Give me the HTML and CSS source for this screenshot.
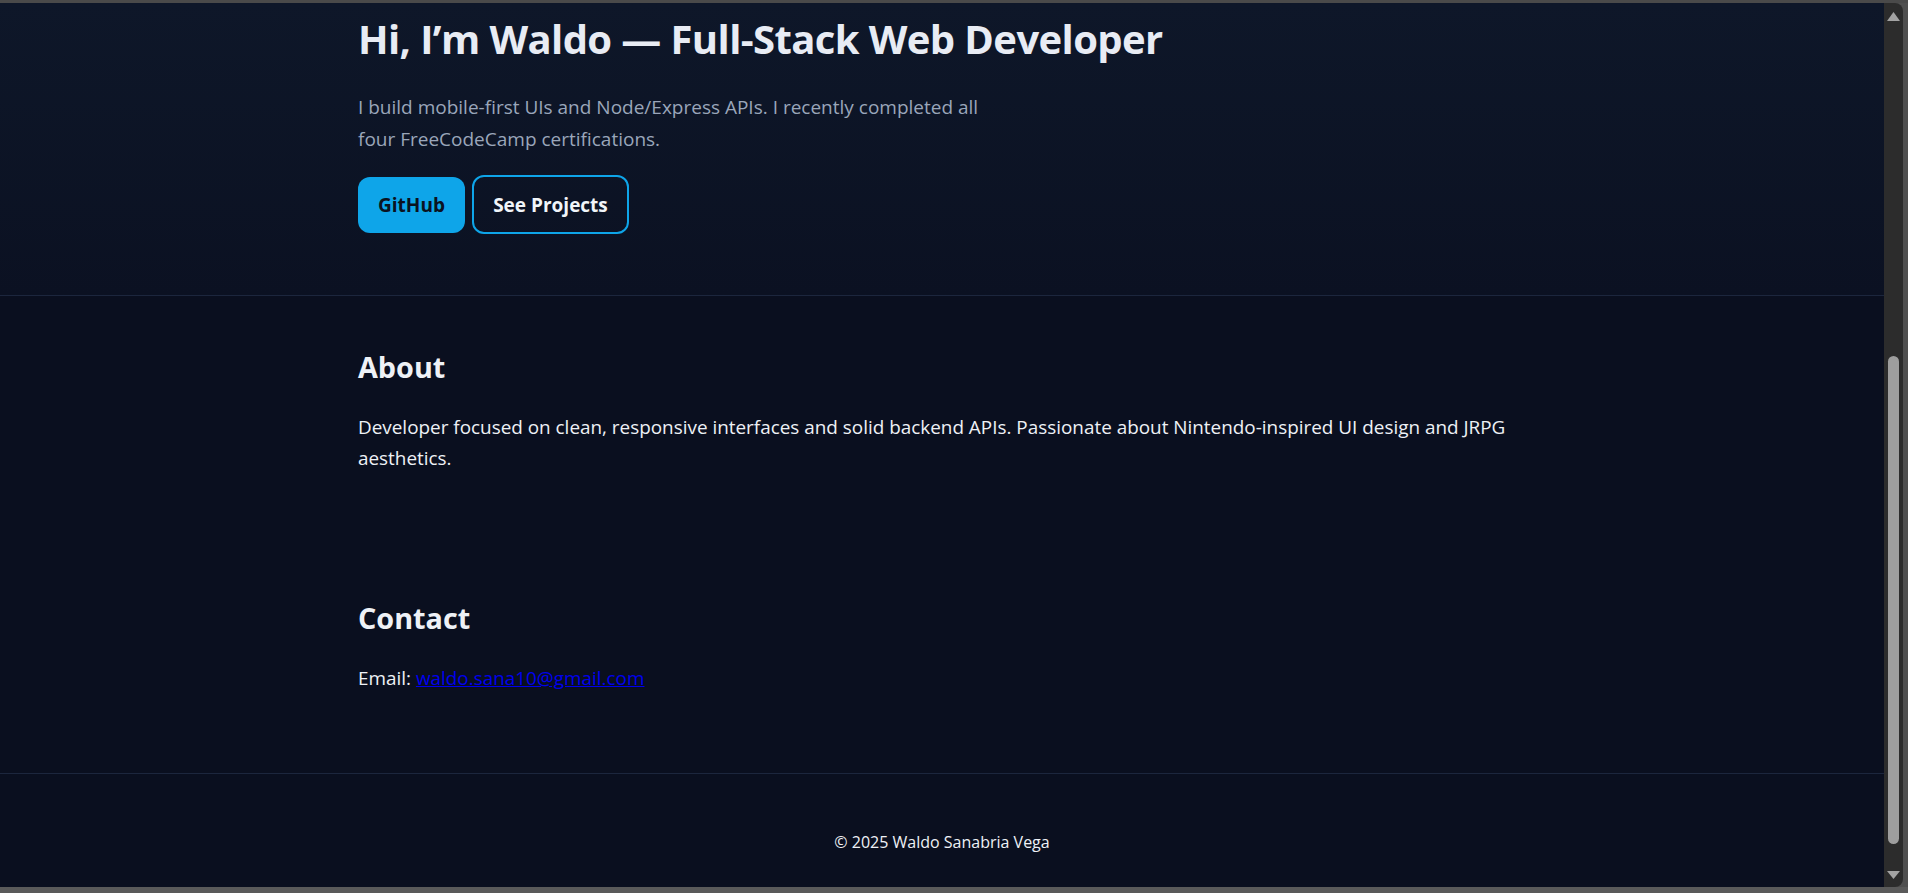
FILE: index.html
```html
<!DOCTYPE html>
<html lang="en">
<head>
<meta charset="utf-8">
<title>Waldo — Full-Stack Web Developer</title>
<link rel="stylesheet" href="styles.css">
</head>
<body>
<div class="window">
  <div class="edge-top"></div>
  <div class="viewport">
    <main class="page">
      <section class="hero">
        <div class="container">
          <h1 class="hero-title">Hi, I’m Waldo — Full-Stack Web Developer</h1>
          <p class="hero-lead">I build mobile-first UIs and Node/Express APIs. I recently completed all four FreeCodeCamp certifications.</p>
          <div class="hero-actions">
            <a class="btn btn-primary" href="#">GitHub</a>
            <a class="btn btn-outline" href="#projects">See Projects</a>
          </div>
        </div>
      </section>
      <section class="section section-about" id="about">
        <div class="container">
          <h2 class="section-title">About</h2>
          <p class="section-text">Developer focused on clean, responsive interfaces and solid backend APIs. Passionate about Nintendo-inspired UI design and JRPG aesthetics.</p>
        </div>
      </section>
      <section class="section section-contact" id="contact">
        <div class="container">
          <h2 class="section-title">Contact</h2>
          <p class="section-text">Email: <a class="mail" href="mailto:waldo.sana10@gmail.com">waldo.sana10@gmail.com</a></p>
        </div>
      </section>
      <footer class="footer">
        <p class="footer-text">© 2025 Waldo Sanabria Vega</p>
      </footer>
    </main>
    <div class="scrollbar">
      <svg class="arrow arrow-up" width="13" height="9" viewBox="0 0 13 9"><polygon points="6.5,0 13,9 0,9" fill="#a3a3a3"/></svg>
      <div class="track"><div class="thumb"></div></div>
      <svg class="arrow arrow-down" width="13" height="8" viewBox="0 0 13 8"><polygon points="0,0 13,0 6.5,8" fill="#a3a3a3"/></svg>
    </div>
    <div class="edge-right"></div>
  </div>
  <div class="edge-bottom"></div>
</div>
</body>
</html>
```
FILE: styles.css
```css
* { box-sizing: border-box; }
html, body { margin: 0; padding: 0; }
body {
  background: #575757;
  font-family: "Open Sans", "Noto Sans", sans-serif;
  overflow: hidden;
}
.window {
  width: 1908px;
  height: 893px;
  display: flex;
  flex-direction: column;
  background: #4f4f4f;
}
.edge-top { height: 3px; background: #4a4a4a; flex: none; }
.edge-bottom { height: 6px; background: #5a5a5a; flex: none; }
.viewport {
  flex: 1;
  min-height: 0;
  display: flex;
}
.page {
  flex: 1;
  min-width: 0;
  overflow: hidden;
  background: #0a0f1f;
  color: #e5e7eb;
}
.container {
  max-width: 1200px;
  margin: 0 auto;
  padding: 0 16px;
}
.hero {
  background: linear-gradient(180deg, #0e1729 0%, #0b1122 100%);
  border-bottom: 1px solid #1c263d;
  padding: 12px 0 61px;
}
.hero-title {
  margin: 0;
  font-size: 40px;
  line-height: 48px;
  font-weight: 700;
  letter-spacing: -0.6px;
  color: #e8ecf4;
}
.hero-lead {
  margin: 28px 0 0;
  max-width: 640px;
  font-size: 19px;
  line-height: 32px;
  color: #9aa6ba;
}
.hero-actions {
  margin-top: 20px;
  display: flex;
  align-items: center;
  gap: 7px;
}
.btn {
  display: inline-flex;
  align-items: center;
  justify-content: center;
  font-weight: 700;
  font-size: 19px;
  text-decoration: none;
  border-radius: 12px;
}
.btn-primary {
  height: 56px;
  width: 107px;
  background: #0ea5e9;
  color: #0b1220;
}
.btn-outline {
  height: 59px;
  width: 157px;
  border: 2px solid #0ea5e9;
  color: #f1f5f9;
  background: transparent;
}
.section-about { padding: 54px 0 0; }
.section-contact { padding: 127px 0 79px; border-bottom: 1px solid #1c263d; }
.section-title {
  margin: 0;
  font-size: 28.8px;
  line-height: 34px;
  font-weight: 700;
  color: #eef1f6;
}
.section-text {
  margin: 28px 0 0;
  font-size: 18.9px;
  line-height: 31px;
  color: #eef1f6;
}
.mail { color: #0000ee; text-decoration: underline; }
.footer { padding-top: 56px; text-align: center; }
.footer-text {
  margin: 0;
  font-size: 16px;
  line-height: 24px;
  color: #eef1f6;
}
.scrollbar {
  width: 19px;
  flex: none;
  background: #2c2c2c;
  border-radius: 0 8px 8px 0;
  display: flex;
  flex-direction: column;
  align-items: center;
  padding: 9px 0 8px;
}
.arrow { flex: none; }
.track {
  flex: 1;
  width: 100%;
  display: flex;
  flex-direction: column;
  align-items: center;
}
.thumb {
  margin-top: 335px;
  width: 11px;
  height: 488px;
  border-radius: 6px;
  background: #9e9e9e;
}
.edge-right { width: 5px; flex: none; background: #4f4f4f; }
```
